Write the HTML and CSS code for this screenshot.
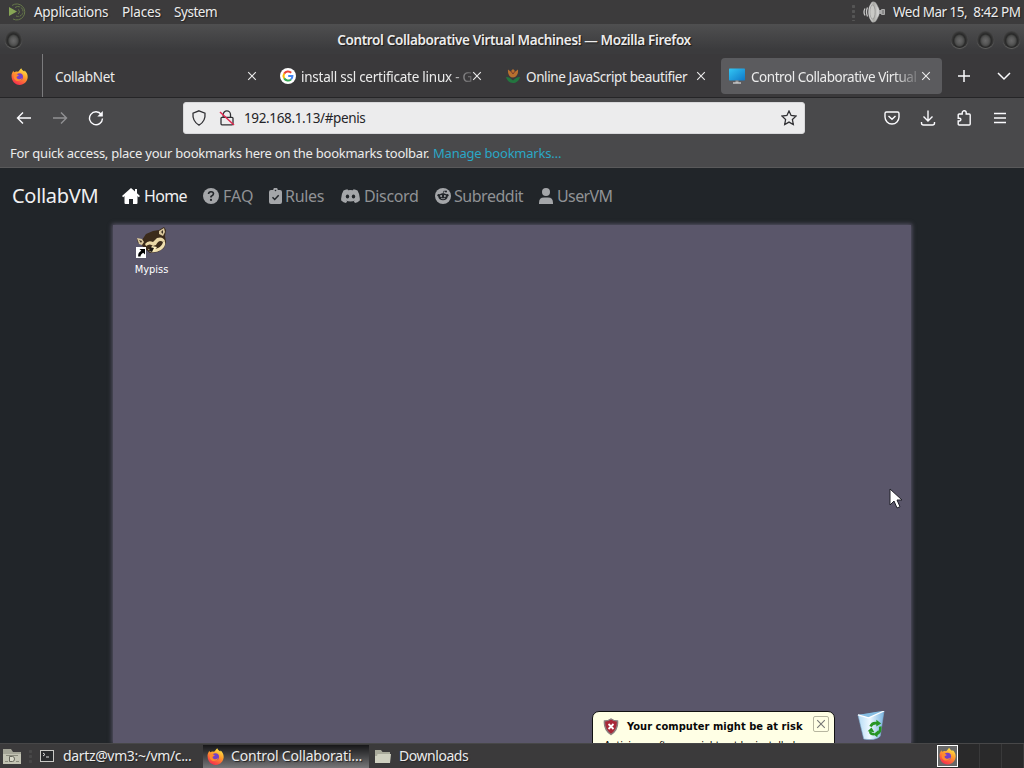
FILE: index.html
```html
<!DOCTYPE html>
<html lang="en">
<head>
<meta charset="utf-8">
<title>Control Collaborative Virtual Machines!</title>
<link rel="stylesheet" href="styles.css">
</head>
<body>
<svg class="defs" aria-hidden="true">
  <defs>
    <linearGradient id="flame" x1=".8" y1="0" x2=".3" y2="1"><stop offset="0" stop-color="#fff04a"/><stop offset=".45" stop-color="#ff9a2b"/><stop offset="1" stop-color="#f5284f"/></linearGradient>
    <linearGradient id="screen" x1="0" y1="0" x2="1" y2="1"><stop offset="0" stop-color="#32c6f4"/><stop offset="1" stop-color="#0f78c8"/></linearGradient>
    <linearGradient id="metal"><stop offset="0" stop-color="#eee"/><stop offset=".5" stop-color="#a8a8a4"/><stop offset="1" stop-color="#ddd"/></linearGradient>
    <linearGradient id="bin"><stop offset="0" stop-color="#b5dcf5"/><stop offset=".45" stop-color="#edf8ff"/><stop offset="1" stop-color="#78b4e0"/></linearGradient>
    <symbol id="firefox" viewBox="0 0 16 16">
      <path fill="url(#flame)" d="M.5 7C.6 4.800 1.700 3.500 2.300 2.500c.1.700.3 1.200.8 1.500C4 3.300 5.300 3 6.300 3.500 8 3.200 8 1.200 9.700.2c.3 1.300 1.500 1.800 2.800 3.200l.3-1c2 1.600 3 4 2.900 6.300-.2 4-3.500 7.200-7.500 7.200C3.500 15.900.4 12 .5 7z"/>
      <circle cx="8" cy="8.300" r="3.300" fill="#7440c8"/>
      <path fill="#ff8a2e" d="M3 5.800c1.700-.5 3.200 0 4.400 1.300-.7.800-1.800.7-2.200 1.500.4 2.200 3.900 2.500 5.500.9-1 3.100-5.600 3.900-7.400 1.200C2.300 9.200 2.300 7.400 3 5.800z"/>
    </symbol>
    <symbol id="close" viewBox="0 0 10 10"><path d="M1.200 1.200l7.600 7.600M8.800 1.200L1.200 8.800" fill="none" stroke="currentColor" stroke-width="1.100"/></symbol>
  </defs>
</svg>

<header class="panel">
  <svg class="mate" viewBox="0 0 18 18"><path d="M0 4v9l8-4.500z" fill="#87a556"/><g fill="none" stroke="#66784a"><path d="M3 2.500a8 8 0 1 1 1 13.500"/><path d="M6 4.500a5 5 0 1 1 1 8.500" stroke-dasharray="5 1"/><path d="M9 6.500a2.500 2.500 0 0 1 0 4.500"/></g></svg>
  <span class="t apps">Applications</span><span class="t places">Places</span><span class="t system">System</span>
  <span class="spacer"></span>
  <span class="grip"></span>
  <svg class="speaker" viewBox="0 0 22 22"><path d="M9 1q3-1 4.500 2L16 8v6l-2.500 5Q12 22 9 21 5.500 17 5.500 11T9 1z" fill="url(#metal)" stroke="#aaa" stroke-width=".5"/><ellipse cx="9.500" cy="11" rx="2.600" ry="7" fill="#c9c9c6" stroke="#888" stroke-width=".6"/><path d="M16 9h2v4h-2z" fill="#aaa"/><path d="M18.500 8.500h3v5h-3z" fill="#888" stroke="#bbb" stroke-width=".8"/><path d="M2 7.500q-2 3.500 0 7M4.500 6.500q-2 4.500 0 9" fill="none" stroke="#c8c8c8" stroke-width="1.300"/></svg>
  <span class="t clock">Wed Mar 15,&nbsp; 8:42 PM</span>
</header>

<div class="titlebar">
  <i class="orb"></i><span class="t wtitle">Control Collaborative Virtual Machines! — Mozilla Firefox</span>
  <div class="orbs"><i class="orb"></i><i class="orb"></i><i class="orb"></i></div>
</div>

<div class="tabs">
  <div class="pinned"><svg width="17" height="17"><use href="#firefox"/></svg></div>
  <div class="tab tab1"><span class="t net">CollabNet</span><svg class="x"><use href="#close"/></svg></div>
  <div class="tab tab2"><svg class="fav" viewBox="0 0 16 16"><circle cx="8" cy="8" r="8" fill="#fff"/><g fill="none" stroke-width="2"><path d="M4.200 5.600A4.500 4.500 0 0 1 11.200 4.800" stroke="#ea4335"/><path d="M4.200 5.600a4.500 4.500 0 0 0 0 4.800" stroke="#fbbc05"/><path d="M4.200 10.400a4.500 4.500 0 0 0 6.800 1" stroke="#34a853"/><path d="M8.200 8.100h4.200a4.500 4.500 0 0 1-1.400 3.300" stroke="#4285f4"/></g></svg><span class="t ssl fade">install ssl certificate linux - G</span><svg class="x"><use href="#close"/></svg></div>
  <div class="tab tab3"><svg class="fav" viewBox="0 0 16 16"><path d="M3 1.500l2.500 2L8 1l2.500 2.500 2.500-2c.5 4.500-1.500 8-5 8s-5.500-3.500-5-8z" fill="#b8702f"/><path d="M5.800 3l2.200 3 2.200-3" stroke="#783b2c" fill="none"/><path d="M1 9c3 0 5 1.500 7 3.500C10 10.500 12 9 15 9c-1 4-4 6-7 6s-6-2-7-6z" fill="#23753f"/></svg><span class="t beauty">Online JavaScript beautifier</span><svg class="x"><use href="#close"/></svg></div>
  <div class="tab tab4"><svg class="fav" viewBox="0 0 16 16"><rect y=".5" width="16" height="12" rx=".7" fill="url(#screen)"/><path d="M6.500 12.500h3V15h-3z" fill="#999"/><path d="M4 15h8" stroke="#ddd" stroke-width="1.200"/></svg><span class="t ctl fade">Control Collaborative Virtual</span><svg class="x"><use href="#close"/></svg></div>
  <svg class="plus" viewBox="0 0 14 14"><path d="M7 1v12M1 7h12" stroke="#fbfbfe" stroke-width="1.500"/></svg>
  <svg class="chev" viewBox="0 0 14 14"><path d="M1 4l6 6 6-6" fill="none" stroke="#fbfbfe" stroke-width="1.500"/></svg>
</div>

<div class="toolbar">
  <svg class="ic back" viewBox="0 0 16 16"><path d="M15 8H1.500M7 2.500L1.500 8 7 13.500"/></svg>
  <svg class="ic fwd" viewBox="0 0 16 16"><path d="M1 8h13.500M9 2.500L14.500 8 9 13.500"/></svg>
  <svg class="ic reload" viewBox="0 0 16 16"><path d="M13.300 4.500A6.500 6.500 0 1 0 14.500 8.500"/><path d="M14.800 1v5.500H9.300z" fill="#fbfbfe" stroke="none"/></svg>
  <div class="url">
    <svg class="shield" viewBox="0 0 16 16"><path d="M8 .8l6 2.300c.5 5-1.500 9.500-6 12-4.500-2.500-6.500-7-6-12z"/></svg>
    <svg class="lock" viewBox="0 0 16 16"><path d="M4.200 7V4.500a3.600 3.600 0 0 1 7.300 0V7M3 7.300h10q1 0 1 1v5.500q0 1-1 1H3q-1 0-1-1V8.300q0-1 1-1z"/><path d="M1 2l14 13" stroke="#e22850" stroke-width="1.500"/></svg>
    <span class="t addr">192.168.1.13/#penis</span>
    <svg class="star" viewBox="0 0 16 16"><path d="M8 1l2.100 4.500 4.900.6-3.600 3.400.9 5L8 12.100l-4.300 2.400.9-5L1 6.100l4.900-.6z"/></svg>
  </div>
  <svg class="ic pocket" viewBox="0 0 16 16"><path d="M2.500 2h11q1.500 0 1.500 1.500V7A7 7 0 0 1 1 7V3.500Q1 2 2.500 2zM4.500 6L8 9.300 11.500 6"/></svg>
  <svg class="ic down" viewBox="0 0 16 16"><path d="M8 .5v10M3.500 6.500L8 11l4.500-4.500M1.500 12v1q0 2 2 2h9q2 0 2-2v-1"/></svg>
  <svg class="ic ext" viewBox="0 0 16 16"><path d="M2.200 8.200V5q0-1 1-1h3V2.800a2 2 0 0 1 4 0V4h3q1 0 1 1v9q0 1-1 1h-10q-1 0-1-1v-3h1.300a1.400 1.400 0 0 0 0-2.800z"/></svg>
  <svg class="ic menu" viewBox="0 0 14 14"><path d="M1 2.500h12M1 7h12M1 11.500h12"/></svg>
</div>
<div class="bookmarks"><span class="t hint">For quick access, place your bookmarks here on the bookmarks toolbar.</span><span class="t manage">Manage bookmarks…</span></div>

<main class="page">
  <nav>
    <span class="t brand">CollabVM</span>
    <svg class="n home" viewBox="0 0 18 16"><path d="M9 0L0 8l1.200 1.200L2.500 8.100V15q0 1 1 1H7v-5h4v5h3.500q1 0 1-1V8.100l1.300 1.100L18 8l-3-2.700V1h-2v2.500z"/></svg><span class="t lhome">Home</span>
    <svg class="n faq" viewBox="0 0 16 16"><circle cx="8" cy="8" r="8"/><path d="M5.500 6Q5.700 3.700 8 3.700q2.500 0 2.500 2.100 0 1.400-2.500 2.700v1" fill="none" stroke="#212529" stroke-width="1.600"/><circle cx="8" cy="11.900" r="1.100" fill="#212529"/></svg><span class="t lfaq">FAQ</span>
    <svg class="n clip" viewBox="0 0 13 16"><path d="M2 2h2.200a2.300 2.300 0 0 1 4.600 0H11q2 0 2 2v10q0 2-2 2H2q-2 0-2-2V4q0-2 2-2z"/><circle cx="6.500" cy="2.500" r=".8" fill="#212529"/><path d="M3.500 9.300l2.200 2.200 4-4.200" fill="none" stroke="#212529" stroke-width="1.500"/></svg><span class="t lrules">Rules</span>
    <svg class="n disc" viewBox="0 0 19 14"><path d="M6.500.2L7 1.300q2.500-.4 5 0l.5-1.100q2.200.3 4 1.300Q19.300 6 18.800 11.500 16.500 13.500 14 14l-1.200-1.800 1.500-.7q-4.800 1.800-9.600 0l1.500.7L5 14Q2.500 13.500.2 11.500-.3 6 2.500 1.500 4.300.5 6.500.2z"/><ellipse cx="6.500" cy="7.500" rx="1.700" ry="1.900" fill="#212529"/><ellipse cx="12.500" cy="7.500" rx="1.700" ry="1.900" fill="#212529"/></svg><span class="t ldisc">Discord</span>
    <svg class="n red" viewBox="0 0 16 16"><circle cx="8" cy="8" r="8"/><g fill="#212529"><circle cx="3.700" cy="7.300" r="1.300"/><circle cx="12.300" cy="7.300" r="1.300"/><ellipse cx="8" cy="8.800" rx="4.700" ry="3.500"/><circle cx="11" cy="3.600" r="1"/></g><path d="M8 6l.8-3 2.200.6" fill="none" stroke="#212529" stroke-width=".7"/><circle cx="6.100" cy="8" r="1"/><circle cx="9.900" cy="8" r="1"/><path d="M6 10.200q2 1.300 4 0" fill="none" stroke="#a4a6a9" stroke-width=".8"/></svg><span class="t lsub">Subreddit</span>
    <svg class="n user" viewBox="0 0 14 16"><circle cx="7" cy="4" r="4"/><path d="M0 16v-1.200Q0 9.500 5 9.500h4q5 0 5 5.300V16z"/></svg><span class="t luser">UserVM</span>
  </nav>
  <section class="desktop">
    <div class="shortcut">
      <svg viewBox="0 0 32 32" width="32" height="32">
        <path d="M1 12l5 1 4-6 7-3 6-1 5-3 2 3-1 6 1 6-2 6-6 4-8 1-6-5-3-4-3-1z" fill="#3b2b1b"/>
        <path d="M1 11l5 1 2 3-2 3-3-1zM23 4l5-3 1 4-2 4-4-2z" fill="#d8c69c"/>
        <path d="M25 5l2-2v4zM3 13l3 1-1 2z" fill="#382c20"/>
        <path d="M9 17q3-4 8-2l4-4q6-2 8 3l-2 1q-4-3-7 3l-3 1q-3-3-7 0z" fill="#ead8a7"/>
        <path d="M27 15l2-1q1 6-4 9-5 3-11 2l-2-3q6 1 10-1 4-2 5-6z" fill="#f0e0b0"/>
        <path d="M16 19l5 1-3 4-4-2z" fill="#fff0bf"/><path d="M14 20l4 1-2 4-3-1z" fill="#1b1714"/>
        <path d="M0 20h10v11H0z" fill="#fff"/>
        <path d="M3.500 22H9v5.500L7.200 25.700Q4.500 27 4.600 29.500H2.200Q1.800 25.500 5.300 23.800z" fill="#000"/>
      </svg>
      <span class="t my">Mypiss</span>
    </div>
    <svg class="pointer" viewBox="0 0 14 22"><path d="M1 1v16l4-4 3 7 3-1.300L8 12h5z" fill="#fff" stroke="#202028" stroke-width="1"/></svg>
    <div class="tray">
      <div class="balloon">
        <div class="bhead"><svg width="16" height="18" viewBox="0 0 16 18"><path d="M8 1q3 2 6.500 2 .8 8.500-6.500 13.500Q.7 11.500 1.500 3 5 3 8 1z" fill="#a92838" stroke="#8a8080" stroke-width="1.500"/><path d="M5.500 6l5 5M10.500 6l-5 5" stroke="#fff" stroke-width="1.800"/></svg><span class="t risk">Your computer might be at risk</span><span class="bx"><svg width="10" height="10"><use href="#close"/></svg></span></div>
        <div class="bbody"><span class="t anti">Antivirus software might not be installed</span></div>
      </div>
      <svg class="recycle" viewBox="0 0 30 32"><path d="M1 4l12-1L28 0l-4 26q-5 5-17 3z" fill="url(#bin)" stroke="#7fb0d4" stroke-width=".6"/><path d="M1 4l11 3L28 0l-9 1z" fill="#86bde2"/><path d="M1 4l11 3L28 0" fill="none" stroke="#fff" stroke-width="1.300"/><g fill="none" stroke="#279524" stroke-width="2.700"><path d="M14 16q2-5 8-3M24 16q1 6-4 8M18 24q-5 0-4-3"/></g><path d="M20 9l5 4-5 3zM22 20l-5 4 4 3zM11 21l4-4 3 5z" fill="#279524"/></svg>
    </div>
  </section>
</main>

<footer class="taskbar">
  <svg class="files" viewBox="0 0 20 17"><path d="M1 1h8l2 3h8v12H1z" fill="#a4a597"/><path d="M1 6h18v10H1z" fill="#c2c3b3"/><path d="M4 7.500h12M3 13.500h3M14 13.500h3" stroke="#898a7c"/><path d="M7.500 8.500h3q2 0 2 2.500t-2 2.500h-3z" fill="#d9dacb" stroke="#66675c"/></svg>
  <span class="grip g2"></span>
  <svg class="term" viewBox="0 0 14 12"><rect x=".5" y=".5" width="13" height="11" fill="#292b2d" stroke="#c9c9c5"/><path d="M3 3l2 1.500L3 6M6 7h3" fill="none" stroke="#ddd"/></svg>
  <span class="t dartz">dartz@vm3:~/vm/c...</span>
  <div class="active"><svg width="17" height="17"><use href="#firefox"/></svg><span class="t coll">Control Collaborati...</span></div>
  <svg class="folder" viewBox="0 0 16 14"><path d="M0 1h6l1.500 2H15v11H0z" fill="#a9aa9b"/><path d="M2.500 5H16l-1 9H0V7h2z" fill="#cfd0c0"/></svg>
  <span class="t dl">Downloads</span>
  <span class="spacer"></span>
  <div class="switcher"><div class="ws"><svg width="17" height="18"><use href="#firefox"/></svg></div><i></i><i></i><i></i></div>
</footer>
</body>
</html>
```
FILE: styles.css
```css
* { box-sizing: border-box; }
body { margin: 0; width: 1024px; height: 768px; overflow: hidden; display: flex; flex-direction: column; background: #212529; color: #ececec; font: 13.5px/20px "Noto Sans", sans-serif; }
.defs { position: absolute; width: 0; height: 0; }
svg { display: block; flex: none; }
.t { white-space: nowrap; flex: none; }
.spacer { flex: 1; }
.panel, .titlebar, .tabs, .toolbar, .bookmarks, .taskbar { display: flex; align-items: center; flex: none; }

.panel { height: 24px; background: #3c3b3c; text-shadow: 1px 1px 1px #222; padding: 0 4px 0 0; }
.mate { width: 18px; height: 18px; margin-left: 9px; }
.apps { margin-left: 7px; width: 88px; letter-spacing: -.28px; }
.places { width: 52px; letter-spacing: -.15px; }
.system { letter-spacing: -.45px; }
.grip { width: 5px; height: 17px; background: radial-gradient(circle, #555 1.300px, transparent 2px) 0 0 / 5px 5px; }
.speaker { width: 22px; height: 22px; margin: 0 8px 0 7px; }
.clock { letter-spacing: -.5px; width: 127px; }

.titlebar { height: 30px; background: linear-gradient(#4f4f50, #3b3b3d 85%); padding: 1px 4px 0 5px; justify-content: space-between; }
.orb { width: 17px; height: 17px; border-radius: 50%; background: radial-gradient(ellipse at 50% 57%, #686868 0, #585858 3px, #484948 4.500px, #282828 5.800px, #333 7px, #444 8.500px); box-shadow: 0 1px 1px #626260; }
.wtitle { font-weight: 600; text-shadow: 1px 1px 1px #181818; margin-left: 55px; letter-spacing: -.34px; }
.orbs { display: flex; gap: 9px; }

.tabs { height: 44px; background: #3a393b; border-bottom: 1px solid #252527; }
.pinned { width: 43px; height: 43px; border-right: 1px solid #7b7b7d; padding: 14px 0 0 11px; }
.tab { height: 36px; display: flex; align-items: center; border-radius: 4px; }
.tab .t { position: relative; top: 1px; }
.x { width: 10px; height: 10px; }
.fav { width: 16px; height: 16px; }
.tab1 { width: 226px; margin-left: 3px; padding-left: 9px; }
.tab1 .t { width: 192px; letter-spacing: -.3px; }
.tab2 { width: 224px; padding-left: 8px; }
.tab2 .t { margin-left: 5px; width: 171px; letter-spacing: -.25px; }
.tab3 { width: 216px; padding-left: 9px; }
.tab3 .t { margin-left: 5px; width: 170px; letter-spacing: -.39px; }
.tab4 { width: 221px; margin-left: 9px; padding-left: 8px; background: #5b5b5e; }
.tab4 .t { margin-left: 6px; width: 166px; letter-spacing: -.46px; }
.tab4 .x { margin-left: 4px; }
.fade { mask-image: linear-gradient(90deg, #000 86%, #0004 98%); }
.plus { width: 14px; height: 14px; margin-left: 15px; }
.chev { width: 14px; height: 14px; margin-left: 26px; }

.toolbar { height: 40px; background: #49494b; }
.ic { width: 16px; height: 16px; fill: none; stroke: #fbfbfe; stroke-width: 1.400; }
.back { margin-left: 16px; }
.fwd { margin-left: 20px; opacity: .4; }
.reload { margin-left: 20px; }
.url { width: 622px; height: 32px; margin-left: 79px; border-radius: 3px; background: #ececed; border: 1px solid #d8d8da; color: #242428; display: flex; align-items: center; }
.url svg { width: 16px; height: 16px; fill: none; stroke: #303034; stroke-width: 1.300; }
.url .shield { margin-left: 7px; }
.url .lock { margin-left: 12px; }
.addr { margin-left: 9px; width: 537px; letter-spacing: -.36px; }
.pocket { margin-left: 79px; }
.down { margin-left: 20px; }
.ext { margin-left: 20px; }
.menu { width: 14px; height: 14px; margin-left: 21px; }
.bookmarks { height: 30px; background: #49494b; border-bottom: 1px solid #59595a; font-size: 13px; padding-left: 10px; letter-spacing: -.25px; }
.hint { width: 420px; }
.manage { color: #2aa7c6; margin-left: 3px; letter-spacing: -.22px; }

.page { height: 575px; flex: none; background: #212529; overflow: hidden; }
nav { height: 57px; display: flex; align-items: center; font-size: 16px; line-height: 24px; color: #909295; padding-bottom: 1px; }
nav svg { fill: #a4a6a9; }
.brand { width: 98px; padding-left: 12px; font-size: 20px; color: #f0f0f1; letter-spacing: -.3px; }
nav .home { fill: #fff; width: 18px; height: 16px; margin-left: 24px; }
.lhome { color: #f0f0f1; margin-left: 4px; width: 59px; letter-spacing: -.65px; }
.faq, .red { width: 16px; height: 16px; }
.lfaq { margin-left: 4px; width: 46px; }
.clip { width: 13px; height: 16px; }
.lrules { margin-left: 3px; width: 56px; letter-spacing: -.3px; }
.disc { width: 19px; height: 14px; }
.ldisc { margin-left: 4px; width: 71px; letter-spacing: -.35px; }
.lsub { margin-left: 3px; width: 85px; letter-spacing: -.47px; }
.user { width: 14px; height: 16px; }
.luser { margin-left: 4px; letter-spacing: -.6px; }
.desktop { width: 798px; height: 518px; margin-left: 113px; position: relative; background: #5a566a; box-shadow: 0 0 4px 1px #5a566a; display: flex; flex-direction: column; justify-content: space-between; }
.shortcut { width: 77px; height: 60px; display: flex; flex-direction: column; align-items: center; padding-top: 2px; }
.my { font: 11px/14px "DejaVu Sans Condensed", "DejaVu Sans", sans-serif; margin-top: 4px; color: #fff; }
.shortcut svg { margin-left: 1px; }
.pointer { position: absolute; left: 776px; top: 263px; width: 14px; height: 22px; }
.tray { display: flex; height: 33px; align-items: flex-start; padding-left: 479px; }
.balloon { width: 243px; height: 40px; margin-top: 1px; border: 1px solid #111; border-radius: 7px; background: #ffffe5; color: #080808; font: 11px/14px "DejaVu Sans Condensed", "DejaVu Sans", sans-serif; overflow: hidden; }
.bhead { height: 27px; padding: 2px 0 0 10px; display: flex; align-items: center; }
.risk { font-weight: 700; width: 186px; margin-left: 8px; letter-spacing: .05px; }
.bx { width: 16px; height: 16px; border: 1px solid #b7b6a0; border-radius: 2px; padding: 2px; color: #777; margin-top: -5px; }
.bbody { padding-left: 11px; }
.anti { letter-spacing: -.25px; }
.recycle { width: 29px; height: 31px; margin: 1px 0 0 22px; }

.taskbar { height: 25px; background: #3b3a3b; border-top: 1px solid #474748; text-shadow: 1px 1px 1px #222; font-size: 14px; }
.files { width: 20px; height: 17px; margin-left: 2px; }
.g2 { margin-left: 6px; height: 15px; opacity: .5; }
.term { width: 14px; height: 12px; margin-left: 7px; }
.dartz { margin-left: 9px; width: 140px; letter-spacing: -.35px; }
.active { width: 166px; height: 23px; background: linear-gradient(#171719, #454547 50%, #777779); display: flex; align-items: center; padding-left: 4px; }
.coll { margin-left: 7px; letter-spacing: -.18px; }
.folder { width: 16px; height: 14px; margin-left: 6px; }
.dl { margin-left: 8px; letter-spacing: -.45px; }
.switcher { display: flex; width: 87px; height: 24px; background: #29292a; align-items: center; }
.ws { width: 21px; height: 22px; background: #686868; border: 1px solid #fff; padding: 1px; }
.switcher i { width: 22px; height: 24px; border-right: 1px solid #39393a; }
```
